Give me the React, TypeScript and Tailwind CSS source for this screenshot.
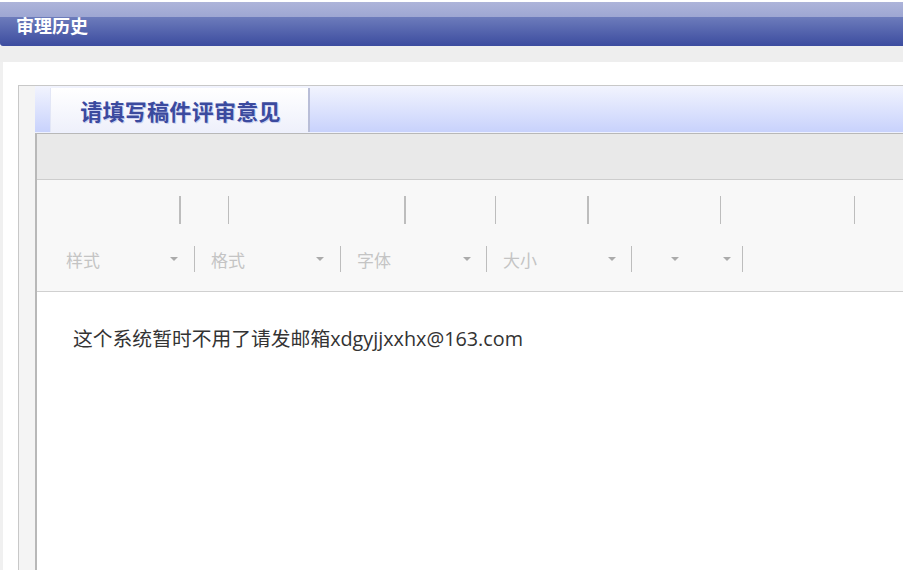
import React from "react";

const Arrow = () => (
  <span className="block w-0 h-0 border-l-[4px] border-r-[4px] border-t-[4px] border-l-transparent border-r-transparent border-t-[#ababab]" />
);

const VSep = ({ w = 1, h = 28 }: { w?: number; h?: number }) => (
  <span
    className={`block shrink-0 bg-[#bdbdbd] ${w === 2 ? "w-[2px]" : "w-px"} ${h === 26 ? "h-[26px]" : "h-[28px]"}`}
  />
);

export default function App() {
  const font = { fontFamily: '"Noto Sans CJK SC", "Noto Sans", sans-serif' };
  return (
    <div className="w-[903px] h-[570px] overflow-hidden bg-white" style={font}>
      {/* header */}
      <div className="pt-[2px] bg-white">
        <div className="h-[44px] rounded-bl-[3px] flex items-center pl-[16px] pt-[2px] bg-[linear-gradient(to_bottom,#adb4da_0%,#9ea7d3_33%,#6c7bbb_35%,#3c4c9f_100%)]">
          <span className="text-white font-bold text-[18px] leading-none">审理历史</span>
        </div>
      </div>
      <div className="h-[16px] bg-[#eeeeee]" />
      <div className="flex h-[508px]">
        <div className="w-[3px] bg-[#f0f0f0] shrink-0" />
        <div className="flex-1 pt-[23px] pl-[15px] bg-white">
          <div className="h-full border-t border-l border-[#c8c8c8] flex">
            <div className="w-[16px] shrink-0 bg-[#f4f4f4]" />
            <div className="flex-1 flex flex-col">
              {/* tab header */}
              <div className="h-[47px] shrink-0 bg-[linear-gradient(to_bottom,#f2f4fe_0%,#c8d2fc_100%)] border-b border-[#eef1ff] pl-[15px] pt-[2px]">
                <div className="w-[260px] h-[44px] bg-[linear-gradient(to_bottom,#ffffff_0%,#eef0fb_100%)] border-l border-[#e2e6f6] border-r-2 border-r-[#b9bed8] flex items-center justify-center pl-[2px]">
                  <span
                    className="text-[22px] font-bold text-[#3b4a9e] leading-none tracking-[0.3px]"
                    style={{ textShadow: "1px 1px 0 #c9cff0" }}
                  >
                    请填写稿件评审意见
                  </span>
                </div>
              </div>
              {/* editor */}
              <div className="flex-1 border-t border-l-2 border-[#b8b8b8] flex flex-col">
                <div className="h-[46px] bg-[#e9e9e9] border-b border-[#cdcdcd]" />
                <div className="h-[112px] bg-[#f8f8f8] border-b border-[#d0d0d0] pt-[16px]">
                  <div className="flex items-center h-[28px]">
                    <div className="w-[142px] shrink-0" />
                    <VSep w={2} />
                    <div className="w-[47px] shrink-0" />
                    <VSep />
                    <div className="w-[175px] shrink-0" />
                    <VSep w={2} />
                    <div className="w-[89px] shrink-0" />
                    <VSep />
                    <div className="w-[91px] shrink-0" />
                    <VSep w={2} />
                    <div className="w-[131px] shrink-0" />
                    <VSep />
                    <div className="w-[133px] shrink-0" />
                    <VSep />
                  </div>
                  <div className="flex items-center h-[26px] mt-[22px] text-[17px] text-[#c4c4c4]">
                    <div className="w-[157px] shrink-0 flex items-center pl-[29px] pr-[16px]">
                      <span className="leading-none">样式</span>
                      <span className="ml-auto"><Arrow /></span>
                    </div>
                    <VSep h={26} />
                    <div className="w-[145px] shrink-0 flex items-center pl-[16px] pr-[16px]">
                      <span className="leading-none">格式</span>
                      <span className="ml-auto"><Arrow /></span>
                    </div>
                    <VSep h={26} />
                    <div className="w-[145px] shrink-0 flex items-center pl-[16px] pr-[15px]">
                      <span className="leading-none">字体</span>
                      <span className="ml-auto"><Arrow /></span>
                    </div>
                    <VSep h={26} />
                    <div className="w-[144px] shrink-0 flex items-center pl-[16px] pr-[15px]">
                      <span className="leading-none">大小</span>
                      <span className="ml-auto"><Arrow /></span>
                    </div>
                    <VSep h={26} />
                    <div className="w-[110px] shrink-0 flex items-center pl-[39px]">
                      <Arrow />
                      <span className="ml-[44px]"><Arrow /></span>
                    </div>
                    <VSep h={26} />
                  </div>
                </div>
                <div className="flex-1 bg-white pl-[36px] pt-[34px]">
                  <p
                    className="text-[19.8px] text-[#333333] leading-[26px] whitespace-nowrap"
                    style={{ fontFamily: '"Open Sans", "Noto Sans CJK SC", sans-serif' }}
                  >
                    这个系统暂时不用了请发邮箱xdgyjjxxhx@163.com
                  </p>
                </div>
              </div>
            </div>
          </div>
        </div>
      </div>
    </div>
  );
}
